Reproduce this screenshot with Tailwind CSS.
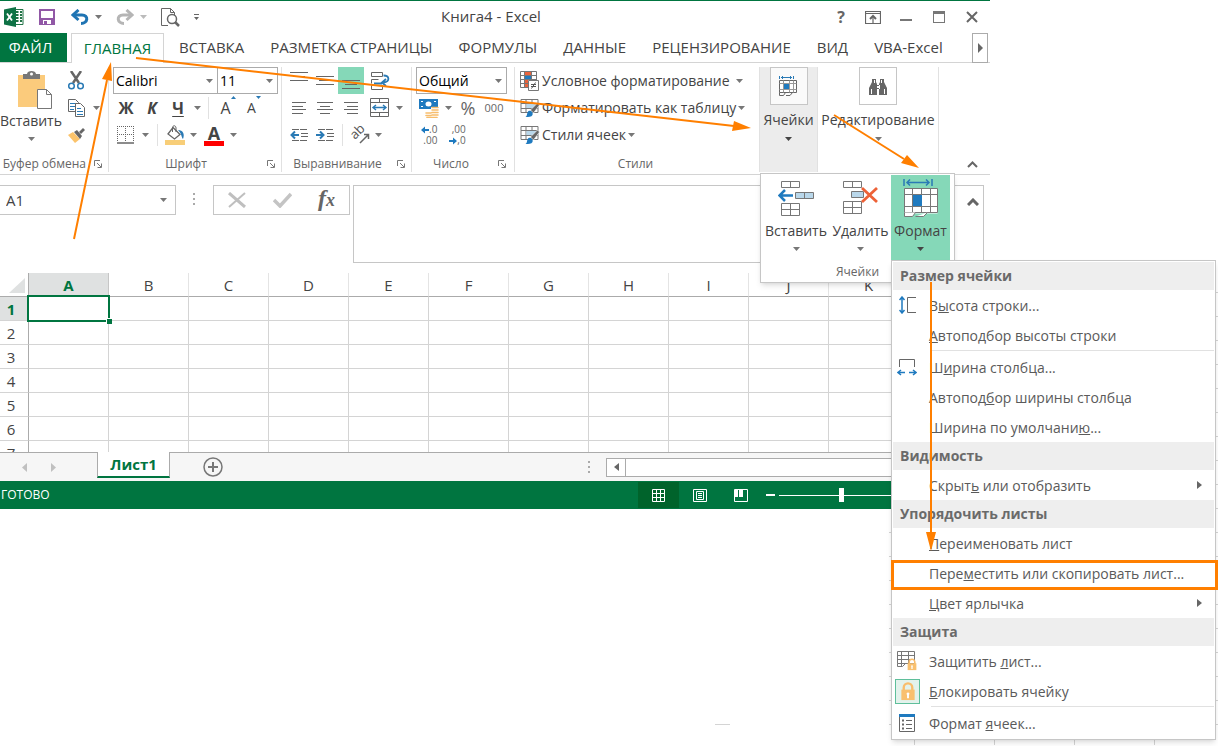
<!DOCTYPE html>
<html lang="ru">
    <head>
        <meta charset="UTF-8" />
        <meta name="viewport" content="width=device-width, initial-scale=1.0" />
        <title>Книга4 - Excel</title>
        <script src="https://cdn.jsdelivr.net/npm/@tailwindcss/browser@4"></script>
    </head>
    <body class="relative min-h-screen overflow-hidden bg-white font-['Open_Sans','Noto_Sans',sans-serif] text-sm text-[#444]">
        <!-- Shared symbols -->
        <svg class="hidden">
            <symbol id="caret" viewBox="0 0 7 4"><path d="M0 0h7L3.5 4z" fill="currentColor" /></symbol>
            <symbol id="launcher" viewBox="0 0 8 8">
                <path d="M.5 6V.5H6M3 3l4 4M7.500 3.500v4h-4" fill="none" stroke="#777" />
            </symbol>
            <symbol id="format" viewBox="0 0 36 38">
                <path d="M1 0v7M29 0v7M4 3.500h22M7 .5l-3 3 3 3M23 .5l3 3-3 3" fill="none" stroke="#2a7ab5" stroke-width="1.500" />
                <path d="M1.500 9.500h33v25h-33z" fill="#fff" />
                <path d="M1.500 9.500h33v24h-33zM9.500 9.500v24M18.500 9.500v24M27.500 9.500v24M1.500 15.500h33M1.500 27.500h33" fill="none" stroke="#777" />
                <path d="M10 16h9v11h-9z" fill="#1f7abf" />
                <path d="M1.500 33.500v4h8l3-4M12.500 37.500h8l4-4" fill="#fff" stroke="#777" />
            </symbol>
            <symbol id="tablebrush" viewBox="0 0 19 18">
                <path d="M.5.5h17v13H.5zM5.500.5v13M11.500.5v13M.5 4.500h17M.5 9.500h17" fill="#fff" stroke="#777" />
                <path d="M6 5h11v4H6z" fill="#b9d7ea" />
                <path d="M17 4l2 2-6 8-3-3z" fill="#666" stroke="#fff" stroke-width=".6" />
                <path d="M5 18c2-1 1-4 3-6 2-1 5 1 4 4-1 2-4 2-7 2z" fill="#1f7abf" />
            </symbol>
            <symbol id="lock" viewBox="0 0 16 20">
                <path d="M3.500 9V6a4.500 4.500 0 0 1 9 0v3" fill="none" stroke="#f9bd6c" stroke-width="2.500" />
                <path d="M1 8h14v11H1z" fill="#f9c06f" />
                <path d="M8 11a1.500 1.500 0 0 1 1 2.600V17H7v-3.400A1.500 1.500 0 0 1 8 11z" fill="#fff" />
            </symbol>
        </svg>

        <!-- Sheet edge showing behind the menu -->
        <svg class="absolute inset-0 h-full w-full" stroke="#d4d4d4">
            <path d="M1215 292.500h3M1215 316.500h3M1215 340.500h3M1215 364.500h3M1215 388.500h3M1215 412.500h3M1215 436.500h3M1215 460.500h3M1215 484.500h3M1215 508.500h3M889 532.500h329M889 556.500h329M889 580.500h329M889 604.500h329M889 628.500h329M889 652.500h329M889 676.500h329M889 700.500h329M889 724.500h329M914.500 740v5M994.500 740v5M1074.500 740v5M1154.500 740v5M715 724.500h15" />
        </svg>

        <div class="relative w-full max-w-[990px] border-t border-[#007540]">
            <!-- Title bar -->
            <header class="relative flex h-8 items-center">
                <div class="flex items-center pl-1">
                    <svg class="h-5 w-5" viewBox="0 0 20 20">
                        <path d="M10 2.500h9v15h-9z" fill="#fff" stroke="#217346" />
                        <path d="M12 5h2.500M16 5h2M12 8h2.500M16 8h2M12 11h2.500M16 11h2M12 14h2.500M16 14h2" stroke="#217346" stroke-width="1.800" />
                        <path d="M0 2.500 12 0v20L0 17.500z" fill="#0e7245" />
                        <path d="M3 6.500l5 7M8 6.500l-5 7" stroke="#fff" stroke-width="1.800" />
                    </svg>
                    <button class="ml-[15px]" aria-label="Сохранить">
                        <svg class="h-4 w-4" viewBox="0 0 16 16">
                            <path d="M1 1h14v14H1z" fill="#fff" stroke="#9158a6" stroke-width="2" />
                            <path d="M1 9h14v6H1z" fill="#9158a6" />
                            <path d="M4 11h8v4H4z" fill="#fff" />
                            <path d="M5 12h3v4H5z" fill="#9158a6" />
                        </svg>
                    </button>
                    <button class="ml-4 flex items-center gap-1.5" aria-label="Отменить">
                        <svg class="h-4 w-[18px]" viewBox="0 0 18 16" fill="none" stroke="#1f74b3" stroke-width="3">
                            <path d="M2 6h9c7 0 6 8.500-1 8.500" />
                            <path d="M7.500 1 2 6l5.500 5" />
                        </svg>
                        <svg class="h-1 w-[7px] text-[#777]"><use href="#caret" /></svg>
                    </button>
                    <button class="ml-[14px] flex items-center gap-1.5" aria-label="Вернуть">
                        <svg class="h-4 w-[18px]" viewBox="0 0 18 16" fill="none" stroke="#b5b5b5" stroke-width="3">
                            <path d="M16 6H7c-7 0-6 8.500 1 8.500" />
                            <path d="M10.500 1 16 6l-5.500 5" />
                        </svg>
                        <svg class="h-1 w-[7px] text-[#bbb]"><use href="#caret" /></svg>
                    </button>
                    <button class="ml-[14px]" aria-label="Просмотр">
                        <svg class="h-[19px] w-[19px]" viewBox="0 0 19 19" fill="none" stroke="#666">
                            <path d="M7 17.500H.5V.5h9l4 4V7M9.500.5v4h4" />
                            <circle cx="11" cy="11" r="4.500" stroke-width="1.500" />
                            <path d="M14 14l4 4" stroke-width="2.500" />
                        </svg>
                    </button>
                    <button class="ml-[14px]" aria-label="Настройка">
                        <svg class="h-[6px] w-[5px]" viewBox="0 0 5 6"><path d="M0 0h5v1H0zM0 3h5L2.500 6z" fill="#666" /></svg>
                    </button>
                </div>
                <h1 class="absolute left-1/2 -translate-x-1/2 pr-2 text-[15px]">Книга4 - Excel</h1>
                <div class="ml-auto flex items-center pr-3">
                    <button class="mr-5 text-base font-bold text-[#666]" aria-label="Справка">?</button>
                    <button class="mr-[19px]" aria-label="Параметры ленты">
                        <svg class="h-[13px] w-4" viewBox="0 0 16 13" fill="none" stroke="#666">
                            <path d="M.5.500h15v12H.5zM.5 2.500h15M8 12V5" stroke-width="1.200" />
                            <path d="M5 8l3-3 3 3" stroke-width="2" />
                        </svg>
                    </button>
                    <button class="mr-[21px]" aria-label="Свернуть">
                        <svg class="h-3 w-3" viewBox="0 0 12 12"><path d="M0 8h12v2H0z" fill="#777" /></svg>
                    </button>
                    <button class="mr-[21px]" aria-label="Развернуть">
                        <svg class="h-3 w-3" viewBox="0 0 12 12"><path d="M0 0h12v12H0zM1 3v8h10V3z" fill="#777" fill-rule="evenodd" /></svg>
                    </button>
                    <button aria-label="Закрыть">
                        <svg class="h-3 w-3" viewBox="0 0 12 12"><path d="M1 1l10 10M11 1 1 11" stroke="#666" stroke-width="2" /></svg>
                    </button>
                </div>
            </header>

            <!-- Ribbon tabs -->
            <nav class="flex h-[30px] items-stretch border-b border-[#d4d4d4] pr-0.5 text-[15px]">
                <button class="mr-1 w-[67px] bg-[#007540] pr-1.5 text-white">ФАЙЛ</button>
                <button class="-mb-px w-[93px] border border-b-0 border-[#d4d4d4] bg-white text-[#007540]">ГЛАВНАЯ</button>
                <div class="flex grow items-center gap-[26px] overflow-hidden whitespace-nowrap pl-[15px]">
                    <button>ВСТАВКА</button>
                    <button>РАЗМЕТКА СТРАНИЦЫ</button>
                    <button>ФОРМУЛЫ</button>
                    <button>ДАННЫЕ</button>
                    <button>РЕЦЕНЗИРОВАНИЕ</button>
                    <button>ВИД</button>
                    <button>VBA-Excel</button>
                </div>
                <button class="-mb-px flex w-4 items-center justify-center border border-[#ababab]" aria-label="Прокрутить вкладки">
                    <svg class="h-[10px] w-[5px]" viewBox="0 0 5 10"><path d="M0 0v10l5-5z" fill="#666" /></svg>
                </button>
            </nav>

            <!-- Ribbon -->
            <div class="flex h-28 items-stretch border-b border-[#d4d4d4] pt-1 pb-0.5">
                <section class="flex w-[109px] flex-col border-r border-[#e1e1e1]">
                    <div class="flex h-[82px]">
                        <button class="flex w-[62px] flex-col items-center pt-1">
                            <svg class="ml-2 h-[38px] w-[34px]" viewBox="0 0 34 38">
                                <path d="M0 4h27v32H0z" fill="#fbcb7c" />
                                <path d="M5 8V3h4c0-4 9-4 9 0h4v5z" fill="#777" />
                                <circle cx="13.500" cy="3" r="1.500" fill="#fff" />
                                <path d="M19.500 18.500h9l5 5v14h-14zM28.500 18.500v5h5" fill="#fff" stroke="#777" />
                            </svg>
                            <span class="leading-6">Вставить</span>
                            <svg class="mt-1 h-1 w-[7px] text-[#777]"><use href="#caret" /></svg>
                        </button>
                        <div class="flex flex-col pl-1.5">
                            <button class="flex h-[27px] items-center" aria-label="Вырезать">
                                <svg class="h-[19px] w-4" viewBox="0 0 16 19" fill="none">
                                    <path d="M3 0l8 12M13 0 5 12" stroke="#666" stroke-width="2.500" />
                                    <circle cx="3.500" cy="15" r="2.800" stroke="#2a7ab5" stroke-width="1.500" />
                                    <circle cx="12.500" cy="15" r="2.800" stroke="#2a7ab5" stroke-width="1.500" />
                                </svg>
                            </button>
                            <button class="flex h-[27px] items-center gap-2" aria-label="Копировать">
                                <svg class="h-[18px] w-[17px]" viewBox="0 0 17 18" stroke="#666">
                                    <path d="M.5.5h7l3 3v9H.5z" fill="#fff" />
                                    <path d="M2 4.500h6M2 7.500h6M2 10.500h4" stroke="#2a7ab5" />
                                    <path d="M7.500 4.500h5l4 4v9h-9z" fill="#fff" />
                                    <path d="M9 9.500h4M9 12.500h6M9 15.500h6" stroke="#2a7ab5" />
                                </svg>
                                <svg class="h-1 w-[7px] text-[#777]"><use href="#caret" /></svg>
                            </button>
                            <button class="flex h-[27px] items-center" aria-label="Формат по образцу">
                                <svg class="h-4 w-[17px]" viewBox="0 0 17 16">
                                    <path d="M0 8l5-3 7 7-5 4z" fill="#fbc36b" />
                                    <path d="M6 5l3-2 5 6-2 3z" fill="#666" />
                                    <path d="M11 5l4-4 2 2-4 4z" fill="#666" />
                                </svg>
                            </button>
                        </div>
                    </div>
                    <div class="mt-auto flex items-center justify-end gap-2 pr-1.5 text-xs whitespace-nowrap text-[#666]">
                        Буфер обмена
                        <svg class="h-2 w-2 shrink-0"><use href="#launcher" /></svg>
                    </div>
                </section>

                <section class="flex w-[173px] flex-col border-r border-[#e1e1e1]">
                    <div class="flex h-[27px] pl-1">
                        <div class="relative w-[105px] border border-[#ababab]">
                            <select class="h-full w-full appearance-none bg-white pl-0.5 text-black" aria-label="Шрифт"><option>Calibri</option></select>
                            <svg class="absolute top-[11px] right-1 h-1 w-[7px] text-[#777]"><use href="#caret" /></svg>
                        </div>
                        <div class="relative w-[60px] border border-l-0 border-[#ababab]">
                            <select class="h-full w-full appearance-none bg-white pl-0.5 text-black" aria-label="Размер шрифта"><option>11</option></select>
                            <svg class="absolute top-[11px] right-1 h-1 w-[7px] text-[#777]"><use href="#caret" /></svg>
                        </div>
                    </div>
                    <div class="flex h-[27px] items-center pl-1 text-base">
                        <button class="w-[26px] font-bold">Ж</button>
                        <button class="w-[26px] font-bold italic">К</button>
                        <button class="w-[26px] font-bold underline underline-offset-2">Ч</button>
                        <svg class="mx-[3px] h-1 w-[7px] text-[#777]"><use href="#caret" /></svg>
                        <span class="mr-1.5 ml-1 h-[22px] w-px bg-[#e1e1e1]"></span>
                        <button class="flex w-[26px] justify-center" aria-label="Увеличить размер">
                            A<svg class="h-[3px] w-[5px]" viewBox="0 0 5 3"><path d="M0 3h5L2.500 0z" fill="#2a7ab5" /></svg>
                        </button>
                        <button class="flex w-[26px] justify-center" aria-label="Уменьшить размер">
                            <span class="text-sm leading-6">A</span><svg class="h-[3px] w-[5px]" viewBox="0 0 5 3"><path d="M0 0h5L2.500 3z" fill="#2a7ab5" /></svg>
                        </button>
                    </div>
                    <div class="flex h-7 items-center pl-1">
                        <button class="flex w-[26px] justify-center" aria-label="Границы">
                            <svg class="h-[18px] w-[18px]" viewBox="0 0 18 18" fill="none" stroke="#666">
                                <path d="M.5 0v16M8.500 0v16M16.500 0v16M0 .5h17M0 8.500h17" stroke-dasharray="1 1" />
                                <path d="M0 17h17" stroke-width="1.500" />
                            </svg>
                        </button>
                        <svg class="mx-[3px] h-1 w-[7px] text-[#777]"><use href="#caret" /></svg>
                        <span class="mx-[5px] h-[22px] w-px bg-[#e1e1e1]"></span>
                        <button class="flex w-6 justify-center" aria-label="Цвет заливки">
                            <svg class="h-5 w-5" viewBox="0 0 20 20">
                                <path d="M8 2.500l7 7-5.500 4.500L3 9z" fill="#fff" stroke="#666" stroke-width="1.300" />
                                <path d="M7.500 7V3c0-3 3.500-3 3.500 0v4" fill="none" stroke="#666" />
                                <path d="M13 5c5 0 7 4 5 9-2-2-1-5-5-9z" fill="#2a7ab5" />
                                <path d="M0 15h20v5H0z" fill="#f8ce78" />
                            </svg>
                        </button>
                        <svg class="mx-[3px] h-1 w-[7px] text-[#777]"><use href="#caret" /></svg>
                        <button class="ml-0.5 flex w-6 flex-col items-center" aria-label="Цвет текста">
                            <span class="text-lg leading-4 font-bold">A</span>
                            <span class="h-[5px] w-5 bg-[#f00]"></span>
                        </button>
                        <svg class="ml-1 h-1 w-[7px] text-[#777]"><use href="#caret" /></svg>
                    </div>
                    <div class="mt-auto flex items-center pr-1.5 text-xs text-[#666]">
                        <span class="grow pr-1 text-center">Шрифт</span>
                        <svg class="h-2 w-2"><use href="#launcher" /></svg>
                    </div>
                </section>

                <section class="flex w-[130px] flex-col border-r border-[#e1e1e1] text-[#666]">
                    <div class="flex h-[27px] items-center pl-1">
                        <button class="flex w-[26px] justify-center" aria-label="По верхнему краю">
                            <svg class="h-[18px] w-[18px]" viewBox="0 0 18 18" stroke="currentColor"><path d="M0 .5h18M3 4.500h12M0 8.500h18" /></svg>
                        </button>
                        <button class="flex w-[26px] justify-center" aria-label="По середине">
                            <svg class="h-[18px] w-[18px]" viewBox="0 0 18 18" stroke="currentColor"><path d="M0 4.500h18M3 8.500h12M0 12.500h18" /></svg>
                        </button>
                        <button class="flex h-full w-[26px] items-center justify-center bg-[#85d8b8]" aria-label="По нижнему краю">
                            <svg class="h-[18px] w-[18px]" viewBox="0 0 18 18" stroke="currentColor"><path d="M0 8.500h18M3 12.500h12M0 16.500h18" /></svg>
                        </button>
                        <button class="ml-[7px]" aria-label="Перенести текст">
                            <svg class="h-[18px] w-[19px]" viewBox="0 0 19 18" fill="none" stroke="currentColor">
                                <path d="M.5.5h11v4H.5zM.5 7.500h7M.5 13.500h11v4H.5zM.5 7.500v4" />
                                <path d="M3 11.500h8M12.500 3.500c6 0 7 6 0 7M15 7l-4 3.500 4 3.500" stroke="#2a7ab5" stroke-width="1.800" />
                            </svg>
                        </button>
                    </div>
                    <div class="flex h-[27px] items-center pl-1">
                        <button class="flex w-[26px] justify-center" aria-label="По левому краю">
                            <svg class="h-3 w-[14px]" viewBox="0 0 14 12" stroke="currentColor"><path d="M0 .5h14M0 4.500h11M0 7.500h14M0 11.500h11" /></svg>
                        </button>
                        <button class="flex w-[26px] justify-center" aria-label="По центру">
                            <svg class="h-3 w-4" viewBox="0 0 16 12" stroke="currentColor"><path d="M0 .5h16M3 4.500h10M0 7.500h16M3 11.500h10" /></svg>
                        </button>
                        <button class="flex w-[26px] justify-center" aria-label="По правому краю">
                            <svg class="h-3 w-[14px]" viewBox="0 0 14 12" stroke="currentColor"><path d="M0 .5h14M3 4.500h11M0 7.500h14M3 11.500h11" /></svg>
                        </button>
                        <button class="ml-1.5 flex items-center gap-[7px]" aria-label="Объединить">
                            <svg class="h-[19px] w-[19px]" viewBox="0 0 19 19" fill="none" stroke="currentColor">
                                <path d="M.5.5h18v18H.5zM.5 4.500h18M.5 14.500h18M9.500.5v4M9.500 14.500v4" />
                                <path d="M3 9.500h13M6 7 3 9.500 6 12M13 7l3 2.500-3 2.500" stroke="#2a7ab5" stroke-width="1.400" />
                            </svg>
                            <svg class="h-1 w-[7px] text-[#777]"><use href="#caret" /></svg>
                        </button>
                    </div>
                    <div class="flex h-7 items-center pl-1">
                        <button class="flex w-[26px] justify-center" aria-label="Уменьшить отступ">
                            <svg class="h-3 w-[18px]" viewBox="0 0 18 12" fill="none" stroke="currentColor">
                                <path d="M2 .5h16M11 4.500h7M11 7.500h7M2 11.500h16" stroke-dasharray="7 1" />
                                <path d="M9 6H2M5 2.500 1.500 6 5 9.500" stroke="#2a7ab5" stroke-width="2" />
                            </svg>
                        </button>
                        <button class="flex w-[26px] justify-center" aria-label="Увеличить отступ">
                            <svg class="h-3 w-[18px]" viewBox="0 0 18 12" fill="none" stroke="currentColor">
                                <path d="M2 .5h16M11 4.500h7M11 7.500h7M2 11.500h16" stroke-dasharray="7 1" />
                                <path d="M0 6h7M4 2.500 7.500 6 4 9.500" stroke="#2a7ab5" stroke-width="2" />
                            </svg>
                        </button>
                        <span class="mr-2 ml-1 h-[22px] w-px bg-[#e1e1e1]"></span>
                        <button class="flex items-center gap-1" aria-label="Ориентация">
                            <svg class="h-[18px] w-5 overflow-visible" viewBox="0 0 20 18">
                                <text transform="translate(4 14) rotate(-45)" font-size="13" fill="#555">ab</text>
                                <path d="M9 17l8-8M13 8.500h4.500V13" fill="none" stroke="#666" stroke-width="1.500" />
                            </svg>
                            <svg class="h-1 w-[7px] text-[#777]"><use href="#caret" /></svg>
                        </button>
                    </div>
                    <div class="mt-auto flex items-center pr-1.5 text-xs">
                        <span class="grow pr-1 text-center">Выравнивание</span>
                        <svg class="h-2 w-2"><use href="#launcher" /></svg>
                    </div>
                </section>

                <section class="flex w-[103px] flex-col border-r border-[#e1e1e1] text-[#666]">
                    <div class="flex h-[27px] pl-1">
                        <div class="relative w-[91px] border border-[#ababab]">
                            <select class="h-full w-full appearance-none bg-white pl-0.5 text-black" aria-label="Числовой формат"><option>Общий</option></select>
                            <svg class="absolute top-[11px] right-1 h-1 w-[7px] text-[#777]"><use href="#caret" /></svg>
                        </div>
                    </div>
                    <div class="flex h-[27px] items-center pl-[7px]">
                        <button class="flex items-center gap-1.5" aria-label="Финансовый формат">
                            <svg class="h-5 w-5" viewBox="0 0 20 20">
                                <path d="M0 1h19v10H0z" fill="#1f7abf" />
                                <ellipse cx="9.500" cy="6" rx="3" ry="2.500" fill="#fff" />
                                <path d="M2 3h2v1H2zM2 8h2v1H2zM15 3h2v1h-2z" fill="#fff" />
                                <path d="M12 9h8v10h-8zM6 14h8v6H6z" fill="#fff" />
                                <path d="M13 9.500h6M13 12h6M13 14.500h6M13 17h6M7 15h5M7 17.500h5M8 19.500h10" stroke="#f7bd6c" stroke-width="1.600" stroke-linecap="round" />
                            </svg>
                            <svg class="h-1 w-[7px] text-[#777]"><use href="#caret" /></svg>
                        </button>
                        <button class="w-8 text-lg">%</button>
                        <button class="w-5 text-[11px]">000</button>
                    </div>
                    <div class="flex h-7 items-center gap-2 pl-[9px] text-[10px] leading-[11px]">
                        <button class="flex flex-col items-end" aria-label="Увеличить разрядность">
                            <span class="flex items-center"><svg class="h-2 w-2" viewBox="0 0 8 8"><path d="M0 4l4-3.500V3h4v2H4v2.500z" fill="#1f7abf" /></svg>.0</span>
                            <span>.00</span>
                        </button>
                        <button class="flex flex-col items-end pl-1" aria-label="Уменьшить разрядность">
                            <span>,00</span>
                            <span class="flex items-center"><svg class="h-2 w-2" viewBox="0 0 8 8"><path d="M8 4 4 .5V3H0v2h4v2.500z" fill="#1f7abf" /></svg>,0</span>
                        </button>
                    </div>
                    <div class="mt-auto flex items-center pr-2 text-xs">
                        <span class="grow pr-2 text-center">Число</span>
                        <svg class="h-2 w-2"><use href="#launcher" /></svg>
                    </div>
                </section>

                <section class="flex w-[245px] flex-col border-r border-[#e1e1e1] pl-[5px] whitespace-nowrap">
                    <button class="flex h-[27px] items-center gap-0.5">
                        <svg class="h-5 w-5" viewBox="0 0 20 20">
                            <path d="M.5.5h16v16H.5zM.5 4.500h16M.5 8.500h16M.5 12.500h16M4.500.5v16M11.500.5v16" fill="#fff" stroke="#777" />
                            <path d="M5 1h6v3H5zM5 9h3v3H5zM5 13h4v3H5z" fill="#e9633c" />
                            <path d="M5 5h6v3H5z" fill="#1f7abf" />
                            <path d="M8.500 9.500h10v10h-10z" fill="#fff" stroke="#777" />
                            <path d="M11 13.500h5M11 15.500h5M15.500 11.500l-4 6" stroke="#555" />
                        </svg>
                        <span class="pr-1">Условное форматирование</span>
                        <svg class="h-1 w-[7px] text-[#777]"><use href="#caret" /></svg>
                    </button>
                    <button class="flex h-[27px] items-center gap-0.5">
                        <svg class="h-[18px] w-5"><use href="#tablebrush" /></svg>
                        Форматировать как таблицу
                        <svg class="h-1 w-[7px] text-[#777]"><use href="#caret" /></svg>
                    </button>
                    <button class="flex h-[27px] items-center gap-0.5">
                        <svg class="h-[18px] w-5"><use href="#tablebrush" /></svg>
                        Стили ячеек
                        <svg class="h-1 w-[7px] text-[#777]"><use href="#caret" /></svg>
                    </button>
                    <div class="mt-auto pr-2 text-center text-xs text-[#666]">Стили</div>
                </section>

                <section class="w-[58px] border-r border-[#e1e1e1] bg-[#ececec]">
                    <button class="flex w-full flex-col items-center">
                        <span class="flex h-[38px] w-[38px] items-center justify-center border border-[#c6c6c6] bg-[#fafafa]">
                            <svg class="h-5 w-[19px]" viewBox="0 0 19 20" fill="none" stroke="#666">
                                <path d="M.5 0v3M14.500 0v3M2 1.500h11M4 0 2.500 1.500 4 3M11 0l1.500 1.500L11 3" stroke="#2a7ab5" />
                                <path d="M.5 4.500h17v12H.5z" fill="#fff" />
                                <path d="M4.500 4.500v12M10.500 4.500v12M14.500 4.500v12M.5 7.500h17M.5 13.500h17" stroke="#999" />
                                <path d="M5 8h5v5H5z" fill="#1f7abf" stroke="none" />
                                <path d="M.5 16.500v3h4l2-3M7 19.500h4l2.500-3" />
                            </svg>
                        </span>
                        <span class="mt-1 leading-[22px]">Ячейки</span>
                        <svg class="mt-1.5 h-1 w-[7px]"><use href="#caret" /></svg>
                    </button>
                </section>

                <section class="w-[121px] border-r border-[#e1e1e1]">
                    <button class="flex w-full flex-col items-center">
                        <span class="flex h-[38px] w-[38px] items-center justify-center border border-[#c6c6c6]">
                            <svg class="h-[17px] w-[18px]" viewBox="0 0 18 17" fill="#666">
                                <path d="M3 1h4v3l1 2v11H0v-7l3-6zM15 1h-4v3l-1 2v11h8v-7l-3-6zM7 7h4v4H7z" />
                                <path d="M2 11h1v5H2zM15 11h1v5h-1zM5 2h1v3H5zM12 2h1v3h-1zM8 8h2v2H8z" fill="#fff" />
                            </svg>
                        </span>
                        <span class="mt-1 leading-[22px]">Редактирование</span>
                        <svg class="mt-1.5 h-1 w-[7px] text-[#777]"><use href="#caret" /></svg>
                    </button>
                </section>

                <button class="ml-auto self-end pr-3 pb-1" aria-label="Свернуть ленту">
                    <svg class="h-[7px] w-[11px]" viewBox="0 0 11 7"><path d="M1 6l4.500-4.500L10 6" fill="none" stroke="#666" stroke-width="2" /></svg>
                </button>
            </div>

            <!-- Formula bar -->
            <div class="flex items-start pt-[10px] pr-1.5 pb-[10px]">
                <div class="relative h-[30px] w-44 border border-l-0 border-[#c6c6c6]">
                    <input class="h-full w-full pl-1.5 text-[15px] outline-none" value="A1" aria-label="Имя ячейки" />
                    <svg class="absolute top-3 right-2 h-1 w-[7px] text-[#777]"><use href="#caret" /></svg>
                </div>
                <svg class="mx-[17px] mt-2 h-3 w-[3px]" viewBox="0 0 3 12"><path d="M0 0h2v2H0zM0 5h2v2H0zM0 10h2v2H0z" fill="#aaa" /></svg>
                <div class="flex h-[30px] w-[137px] items-center justify-between border border-[#c6c6c6] px-3.5">
                    <button aria-label="Отмена">
                        <svg class="h-4 w-[18px]" viewBox="0 0 18 16" fill="none" stroke="#bfbfbf"><path d="M1 1l16 14" stroke-width="3" /><path d="M17 1 1 15" stroke-width="2" /></svg>
                    </button>
                    <button aria-label="Ввод">
                        <svg class="h-4 w-[19px]" viewBox="0 0 19 16" fill="none" stroke="#c4c4c4" stroke-width="3.500"><path d="M1 8l6 6L18 2" /></svg>
                    </button>
                    <button class="font-['Liberation_Serif',serif] text-2xl leading-6 font-bold text-[#666] italic" aria-label="Вставить функцию">f<span class="text-lg">x</span></button>
                </div>
                <div class="ml-[3px] flex h-[78px] grow border border-[#c6c6c6]">
                    <textarea class="grow resize-none outline-none" aria-label="Строка формул"></textarea>
                    <button class="self-start pt-3 pr-1" aria-label="Свернуть строку формул">
                        <svg class="h-2 w-3" viewBox="0 0 12 8"><path d="M1 7l5-5 5 5" fill="none" stroke="#666" stroke-width="3" /></svg>
                    </button>
                </div>
            </div>

            <!-- Grid -->
            <div class="h-[179px] overflow-hidden">
                <table class="w-[989px] table-fixed border-separate border-spacing-0 text-[15px] leading-5">
                    <thead>
                        <tr id="columns">
                            <th class="h-6 w-[29px] border-r border-b border-[#ababab] p-0">
                                <svg class="ml-2 h-5 w-[18px]" viewBox="0 0 18 20"><path d="M17 3v15H1z" fill="#dfe1e1" /></svg>
                            </th>
                        </tr>
                    </thead>
                    <tbody id="rows"></tbody>
                </table>
            </div>

            <!-- Sheet tabs -->
            <div class="flex h-[29px] items-center border-t border-[#ababab] bg-[#f6f6f6]">
                <button class="ml-[22px]" aria-label="Предыдущий лист"><svg class="h-[9px] w-[5px]" viewBox="0 0 5 9"><path d="M5 0v9L0 4.500z" fill="#c0c0c0" /></svg></button>
                <button class="ml-6" aria-label="Следующий лист"><svg class="h-[9px] w-[5px]" viewBox="0 0 5 9"><path d="M0 0v9l5-4.500z" fill="#c0c0c0" /></svg></button>
                <button class="-mt-px ml-[41px] h-[26px] w-[73px] self-start border-x border-b-2 border-x-[#ababab] border-b-[#007540] bg-white text-[15px] leading-[22px] font-bold text-[#007540]">Лист1</button>
                <button class="ml-[33px]" aria-label="Новый лист">
                    <svg class="h-5 w-5" viewBox="0 0 20 20" fill="none" stroke="#777"><circle cx="10" cy="10" r="9" stroke-width="1.500" /><path d="M10 5v10M5 10h10" stroke-width="2" /></svg>
                </button>
                <svg class="ml-auto h-3 w-[3px]" viewBox="0 0 3 12"><path d="M0 0h2v2H0zM0 5h2v2H0zM0 10h2v2H0z" fill="#aaa" /></svg>
                <div class="ml-[15px] flex h-[19px] w-96 border border-[#ababab] bg-white">
                    <button class="flex w-[19px] items-center justify-center border-r border-[#ababab]" aria-label="Прокрутить влево">
                        <svg class="h-2 w-[5px]" viewBox="0 0 5 8"><path d="M5 0v8L0 4z" fill="#666" /></svg>
                    </button>
                </div>
            </div>

            <!-- Status bar -->
            <footer class="flex h-7 items-center bg-[#007540] text-xs text-white">
                <span class="pl-px">ГОТОВО</span>
                <button class="ml-auto flex h-[26px] w-[41px] items-center justify-center bg-[#00632b]" aria-label="Обычный">
                    <svg class="h-[13px] w-[13px]" viewBox="0 0 13 13" fill="none" stroke="#fff"><path d="M.5.5h12v12H.5zM4.500 0v13M8.500 0v13M0 4.500h13M0 8.500h13" /></svg>
                </button>
                <button class="flex w-[41px] justify-center" aria-label="Разметка страницы">
                    <svg class="h-[13px] w-[14px]" viewBox="0 0 14 13" fill="none" stroke="#fff"><path d="M.5.5h13v12H.5zM3.500 2.500h7v8h-7zM5 4.500h4M5 6.500h4M5 8.500h4" /></svg>
                </button>
                <button class="flex w-[41px] justify-center" aria-label="Страничный">
                    <svg class="h-[13px] w-[14px]" viewBox="0 0 14 13" fill="none" stroke="#fff"><path d="M.5.5h13v12H.5z" /><path d="M1 1h3v7H1zM5 1h4v7H5z" fill="#fff" stroke="none" /></svg>
                </button>
                <button class="ml-[5px]" aria-label="Уменьшить масштаб"><svg class="h-0.5 w-[9px]"><path d="M0 0h9v2H0z" fill="#fff" /></svg></button>
                <input
                    type="range"
                    value="50"
                    aria-label="Масштаб"
                    class="mr-[86px] ml-1 h-[14px] w-[125px] appearance-none bg-transparent [&::-webkit-slider-runnable-track]:h-px [&::-webkit-slider-runnable-track]:bg-white [&::-webkit-slider-thumb]:-mt-[7px] [&::-webkit-slider-thumb]:h-[14px] [&::-webkit-slider-thumb]:w-[5px] [&::-webkit-slider-thumb]:appearance-none [&::-webkit-slider-thumb]:bg-white"
                />
            </footer>
        </div>

        <!-- Cells group popup -->
        <div class="absolute top-[173px] left-[760px] w-[195px] border border-[#c6c6c6] bg-white p-px shadow-md">
            <div class="flex">
                <button class="flex w-[68px] flex-col items-center pt-1.5">
                    <svg class="h-9 w-9" viewBox="0 0 36 36">
                        <path d="M3.500.5h18v6h-18zM12.500.5v6M3.500 22.500h18v12h-18zM12.500 22.500v12M3.500 28.500h18" fill="#fff" stroke="#777" />
                        <path d="M17.500 11.500h18v6h-18zM26.500 11.500v6" fill="#b9d7ea" stroke="#777" />
                        <path d="M15 14.500H2M7 9l-5.500 5.500L7 20" fill="none" stroke="#1f7abf" stroke-width="2.500" />
                    </svg>
                    <span class="mt-0.5 leading-6">Вставить</span>
                    <svg class="mt-1 h-1 w-[7px] text-[#777]"><use href="#caret" /></svg>
                </button>
                <button class="flex w-[61px] flex-col items-center pt-1.5">
                    <svg class="h-9 w-9" viewBox="0 0 36 36">
                        <path d="M.5.5h18v6H.5zM9.500.5v6M.5 20.500h18v12H.5zM9.500 20.500v12M.5 26.500h18" fill="#fff" stroke="#777" />
                        <path d="M8.500 10.500h12v6h-12z" fill="#b9d7ea" stroke="#777" />
                        <path d="M19 7l15 14M34 7 19 21" stroke="#ed6237" stroke-width="2.800" />
                    </svg>
                    <span class="mt-0.5 leading-6">Удалить</span>
                    <svg class="mt-1 h-1 w-[7px] text-[#777]"><use href="#caret" /></svg>
                </button>
                <button class="flex h-[86px] w-[59px] flex-col items-center bg-[#85d8b8] pt-1">
                    <svg class="h-[38px] w-9"><use href="#format" /></svg>
                    <span class="mt-0.5 leading-6">Формат</span>
                    <svg class="mt-1 h-1 w-[7px]"><use href="#caret" /></svg>
                </button>
            </div>
            <div class="pt-0.5 text-center text-xs leading-[18px] text-[#666]">Ячейки</div>
        </div>

        <!-- Format menu -->
        <div class="absolute top-[260px] left-[891px] w-[325px] border border-[#c6c6c6] bg-white p-px text-[#5a5a5a] shadow-md">
            <h2 class="h-7 bg-[#eee] pl-[7px] leading-7 font-bold text-[#6a6a6a]">Размер ячейки</h2>
            <button class="flex h-[30px] w-full items-center">
                <span class="flex w-9 pl-1.5">
                    <svg class="h-[18px] w-[18px]" viewBox="0 0 18 18" fill="none">
                        <path d="M17 1.500H8.500v15H17" stroke="#666" />
                        <path d="M3 1v16M.5 4 3 1l2.500 3M.5 14 3 17l2.500-3" stroke="#1f7abf" stroke-width="1.500" />
                    </svg>
                </span>
                <span class="pt-0.5">В<u>ы</u>сота строки...</span>
            </button>
            <button class="flex h-[30px] w-full items-center pl-9"><span class="pt-0.5"><u>А</u>втоподбор высоты строки</span></button>
            <hr class="mb-px ml-[38px] border-[#e1e1e1]" />
            <button class="flex h-[30px] w-full items-center">
                <span class="flex w-9 pl-1">
                    <svg class="h-[18px] w-5" viewBox="0 0 20 18" fill="none">
                        <path d="M2.500 9V1.500h15V9" stroke="#666" />
                        <path d="M1 14.500h7M12 14.500h7M4 12l-3 2.500L4 17M16 12l3 2.500-3 2.500" stroke="#1f7abf" stroke-width="1.500" />
                    </svg>
                </span>
                <span class="pt-0.5">Ш<u>и</u>рина столбца...</span>
            </button>
            <button class="flex h-[30px] w-full items-center pl-9"><span class="pt-0.5">Автопод<u>б</u>ор ширины столбца</span></button>
            <button class="flex h-[30px] w-full items-center pl-9"><span class="pt-0.5">Ширина по умолчани<u>ю</u>...</span></button>
            <h2 class="h-7 bg-[#eee] pl-[7px] leading-7 font-bold text-[#6a6a6a]">Видимость</h2>
            <button class="flex h-[30px] w-full items-center justify-between pr-3 pl-9">
                <span class="pt-0.5">Скрыт<u>ь</u> или отобразить</span>
                <svg class="h-2 w-[5px]" viewBox="0 0 5 8"><path d="M0 0v8l5-4z" fill="#666" /></svg>
            </button>
            <h2 class="h-7 bg-[#eee] pl-[7px] leading-7 font-bold text-[#6a6a6a]">Упорядочить листы</h2>
            <button class="flex h-[30px] w-full items-center pl-9"><span class="pt-0.5"><u>П</u>ереименовать лист</span></button>
            <button class="flex h-[30px] w-full items-center pl-9"><span class="pt-0.5">Пере<u>м</u>естить или скопировать лист...</span></button>
            <button class="flex h-[30px] w-full items-center justify-between pr-3 pl-9">
                <span class="pt-0.5"><u>Ц</u>вет ярлычка</span>
                <svg class="h-2 w-[5px]" viewBox="0 0 5 8"><path d="M0 0v8l5-4z" fill="#666" /></svg>
            </button>
            <h2 class="h-7 bg-[#eee] pl-[7px] leading-7 font-bold text-[#6a6a6a]">Защита</h2>
            <button class="flex h-[30px] w-full items-center">
                <span class="flex w-9 pl-1">
                    <svg class="h-5 w-5" viewBox="0 0 20 20">
                        <path d="M.5.5h17v12H.5zM4.500.5v15M11.500.5v12M.5 4.500h17M.5 8.500h17M.5 12.500v3h5l3-3" fill="#fff" stroke="#777" />
                        <svg x="10" y="7" width="10" height="13"><use href="#lock" /></svg>
                    </svg>
                </span>
                <span class="pt-0.5">Защитить <u>л</u>ист...</span>
            </button>
            <button class="flex h-[30px] w-full items-center">
                <span class="flex w-9 pl-0.5">
                    <span class="flex h-[25px] w-[25px] items-center justify-center border border-[#5fbf9b] bg-[#e3f2ec]">
                        <svg class="h-[19px] w-4"><use href="#lock" /></svg>
                    </span>
                </span>
                <span class="pt-0.5"><u>Б</u>локировать ячейку</span>
            </button>
            <hr class="mb-px ml-[38px] border-[#e1e1e1]" />
            <button class="flex h-[30px] w-full items-center">
                <span class="flex w-9 pl-1.5">
                    <svg class="h-[18px] w-4" viewBox="0 0 16 18" fill="none" stroke="#666">
                        <path d="M.5.5h15v17H.5z" />
                        <path d="M0 1.500h16" stroke="#1f7abf" stroke-width="3" />
                        <path d="M7 6.500h6M7 10.500h6M7 14.500h6" />
                        <path d="M3 6.500h2M3 10.500h2M3 14.500h2" stroke-width="2" />
                    </svg>
                </span>
                <span class="pt-0.5">Формат <u>я</u>чеек...</span>
            </button>
        </div>

        <!-- Highlight and arrows -->
        <div class="pointer-events-none absolute top-[560px] left-[891px] h-[30px] w-[327px] border-3 border-[#ff7f00]"></div>
        <svg class="pointer-events-none absolute inset-0 h-full w-full" stroke="#ff7f00" stroke-width="2" fill="#ff7f00">
            <path d="M74 239 107 80M136 58l598 68M834 115l70 44M931 282v252" fill="none" />
            <path d="M111 62l1 19-10-2zM751 128l-19 3 2-10zM919 168l-18-5 6-8zM931 551l-5-19h10z" stroke="none" />
        </svg>

        <script>
            const columns = ['A', 'B', 'C', 'D', 'E', 'F', 'G', 'H', 'I', 'J', 'K', 'L'];
            const head = document.getElementById('columns');
            const body = document.getElementById('rows');

            columns.forEach((name, i) => {
                const th = document.createElement('th');
                th.textContent = name;
                th.className =
                    i === 0
                        ? 'h-6 border-r border-b border-r-[#c6c6c6] border-b-[#ababab] bg-[#dfe1e1] p-0 font-bold text-[#007540]'
                        : 'h-6 border-r border-b border-r-[#e4e4e4] border-b-[#ababab] p-0 font-normal';
                head.appendChild(th);
            });

            for (let row = 1; row <= 7; row++) {
                const tr = document.createElement('tr');
                const th = document.createElement('th');
                th.textContent = row;
                th.className =
                    row === 1
                        ? 'h-6 border-r border-b border-r-[#ababab] border-b-[#d4d4d4] bg-[#dfe1e1] p-0 pr-1.5 font-bold text-[#007540]'
                        : 'h-6 border-r border-b border-r-[#ababab] border-b-[#d4d4d4] p-0 pr-1.5 font-normal';
                tr.appendChild(th);

                columns.forEach((name, i) => {
                    const td = document.createElement('td');
                    td.className = 'relative h-6 border-r border-b border-[#d4d4d4] p-0';
                    // Selected cell frame with its fill handle
                    if (row === 1 && i === 0) {
                        td.innerHTML =
                            '<div class="absolute -top-0.5 -right-0.5 -bottom-0.5 -left-0.5 z-10 border-2 border-[#007540]"></div>' +
                            '<div class="absolute -right-1 -bottom-1 z-10 h-1.5 w-1.5 border-t border-l border-white bg-[#007540]"></div>';
                    }
                    tr.appendChild(td);
                });
                body.appendChild(tr);
            }
        </script>
    </body>
</html>
